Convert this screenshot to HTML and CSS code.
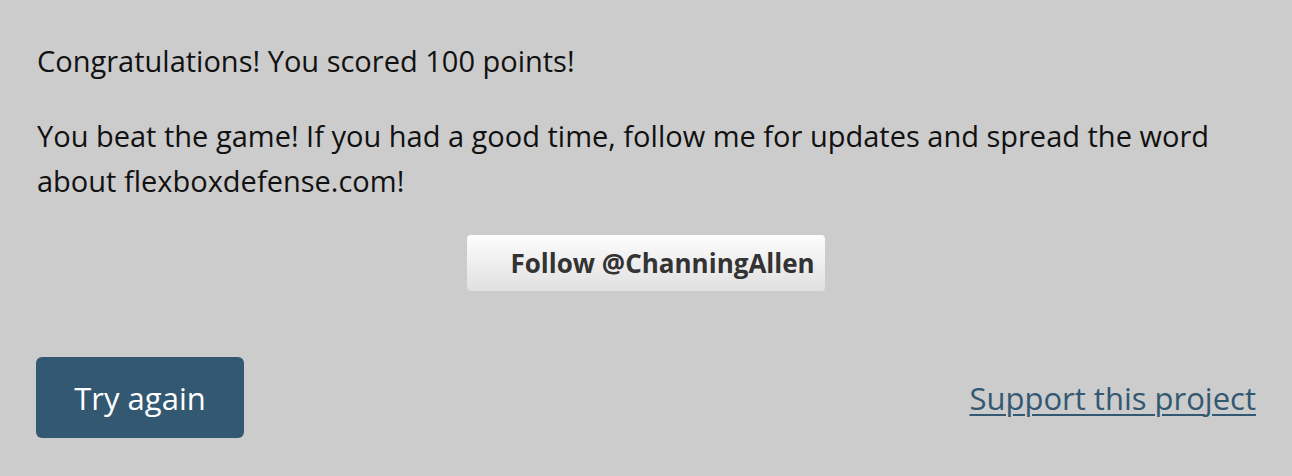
FILE: index.html
```html
<!DOCTYPE html>
<html>
<head>
<meta charset="utf-8">
<link rel="stylesheet" href="styles.css">
</head>
<body>
<main class="panel">
  <p class="msg first">Congratulations! You scored 100 points!</p>
  <p class="msg">You beat the game! If you had a good time, follow me for updates and spread the word about flexboxdefense.com!</p>
  <div class="follow-row">
    <a class="follow" href="#">Follow @ChanningAllen</a>
  </div>
  <div class="actions">
    <button class="retry">Try again</button>
    <a class="support" href="#">Support this project</a>
  </div>
</main>
</body>
</html>
```
FILE: styles.css
```css
html, body {
  margin: 0;
  padding: 0;
  background: #cccccc;
}
body {
  font-family: "Open Sans", "Noto Sans", sans-serif;
  color: #111;
}
.panel {
  padding: 38px 36px 0 37px;
  display: flex;
  flex-direction: column;
}
.msg {
  margin: 0;
  font-size: 29px;
  line-height: 45px;
}
.first {
  margin-bottom: 30px;
}
.follow-row {
  display: flex;
  justify-content: center;
  margin-top: 32px;
}
.follow {
  display: block;
  width: 358px;
  height: 56px;
  box-sizing: border-box;
  padding-left: 44px;
  border-radius: 4px;
  background: linear-gradient(#fdfdfd, #e0e0e0);
  color: #333;
  font-weight: bold;
  font-size: 26px;
  line-height: 56px;
  text-decoration: none;
  margin-left: -2px;
}
.actions {
  margin-top: 66px;
  display: flex;
  justify-content: space-between;
  align-items: center;
}
.retry {
  width: 208px;
  height: 81px;
  margin-left: -1px;
  border: none;
  border-radius: 6px;
  background: #325872;
  color: #fff;
  font-family: inherit;
  font-size: 31px;
  padding: 0;
}
.support {
  color: #325872;
  font-size: 31px;
  text-decoration: underline;
  text-underline-offset: 4px;
  text-decoration-thickness: 2px;
}
```
